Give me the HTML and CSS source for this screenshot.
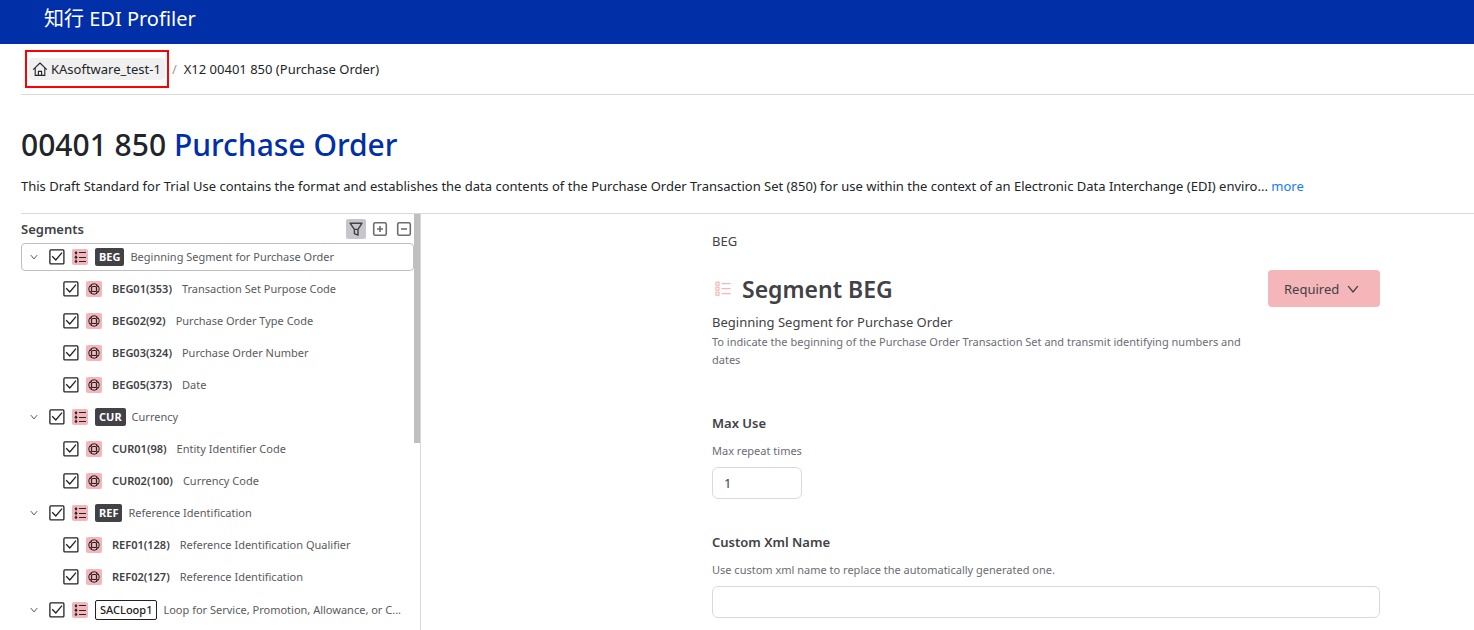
FILE: index.html
```html
<!DOCTYPE html>
<html lang="en">
<head>
  <meta charset="UTF-8">
  <meta name="viewport" content="width=device-width, initial-scale=1.0">
  <title>知行 EDI Profiler</title>
  <link rel="stylesheet" href="styles.css">
</head>
<body>
  <!-- Icon sprite -->
  <svg class="sprite">
    <symbol id="i-home" viewBox="0 0 16 16"><path d="M1.2 8.6 8 2l6.8 6.6M3.2 7v7.4h9.6V7M6.4 14.4v-4h3.2v4" fill="none" stroke="currentColor" stroke-width="1.1" stroke-linejoin="round"/></symbol>
    <symbol id="i-down" viewBox="0 0 10 10"><path d="M1 2.6 5 7.4 9 2.6" fill="none" stroke="currentColor" stroke-width="1.1"/></symbol>
    <symbol id="i-check" viewBox="0 0 16 16"><rect x=".9" y=".9" width="14" height="14" rx="1" fill="none" stroke="currentColor" stroke-width="1.3"/><path d="M3.2 7.2 6.8 11 13 3.6" fill="none" stroke="currentColor" stroke-width="1.3"/></symbol>
    <symbol id="i-list" viewBox="0 0 16 16"><path d="M7 3.5h7M7 8.5h7M7 12.5h7" stroke="currentColor" stroke-width="1"/><path d="M4 3.5v9" stroke="currentColor" stroke-width=".5"/><g fill="currentColor"><circle cx="4" cy="3.7" r="1.3"/><circle cx="4" cy="8.2" r="1.3"/><circle cx="4" cy="12.5" r="1.3"/></g></symbol>
    <symbol id="i-element" viewBox="0 0 16 16"><g fill="none" stroke="currentColor"><circle cx="8" cy="8" r="5.2" stroke-width="1"/><rect x="5.5" y="5.5" width="5" height="5" rx="1" stroke-width="1.2"/></g><path d="M5.5 3v2M10.5 3v2M5.5 11v2M10.5 11v2M3 5.5h2M3 10.5h2M11 5.5h2M11 10.5h2" stroke="currentColor" stroke-width=".9"/></symbol>
    <symbol id="i-segment" viewBox="0 0 16 16"><g fill="none" stroke="currentColor" stroke-width="1.2"><rect x="1" y="1.2" width="3" height="3"/><rect x="1" y="6.2" width="3" height="3"/><rect x="1" y="11.2" width="3" height="3"/><path d="M6.4 2.7h9.2M6.4 7.7h9.2M6.4 12.7h9.2"/></g></symbol>
    <symbol id="i-filter" viewBox="0 0 16 16"><path d="M2 2.2h12L10 8.4v5.8L6.4 12.6V8.4zM6.4 8.4H10" fill="none" stroke="currentColor" stroke-width="1.4" stroke-linejoin="round"/></symbol>
    <symbol id="i-plus" viewBox="0 0 16 16"><rect x="1.7" y="1.7" width="12.6" height="12.6" rx="1.5" fill="none" stroke="currentColor" stroke-width="1.6"/><path d="M5 8h6M8 5v6" stroke="currentColor" stroke-width="1.6"/></symbol>
    <symbol id="i-minus" viewBox="0 0 16 16"><rect x="1.7" y="1.7" width="12.6" height="12.6" rx="1.5" fill="none" stroke="currentColor" stroke-width="1.6"/><path d="M5 8h6" stroke="currentColor" stroke-width="1.6"/></symbol>
  </svg>

  <header class="topbar">
    <span class="brand">知行 EDI Profiler</span>
  </header>

  <div class="page">
    <nav class="breadcrumb">
      <a href="#" class="crumb crumb-active"><svg class="icon"><use href="#i-home"/></svg>KAsoftware_test-1</a>
      <span class="crumb-sep">/</span>
      <span class="crumb">X12 00401 850 (Purchase Order)</span>
    </nav>

    <section class="intro">
      <h1 class="page-title">00401 850 <span class="page-title-name">Purchase Order</span></h1>
      <p class="description">This Draft Standard for Trial Use contains the format and establishes the data contents of the Purchase Order Transaction Set (850) for use within the context of an Electronic Data Interchange (EDI) enviro... <a href="#" class="more">more</a></p>
    </section>

    <div class="workspace">
      <aside class="sidebar">
        <div class="sidebar-head">
          <h2 class="sidebar-title">Segments</h2>
          <div class="tools">
            <button type="button" class="tool tool-on"><svg class="icon"><use href="#i-filter"/></svg></button>
            <button type="button" class="tool"><svg class="icon"><use href="#i-plus"/></svg></button>
            <button type="button" class="tool"><svg class="icon"><use href="#i-minus"/></svg></button>
          </div>
        </div>

        <ul class="tree">
          <li>
            <div class="row row-selected">
              <button type="button" class="toggle"><svg class="caret"><use href="#i-down"/></svg></button>
              <span class="check"><input type="checkbox" id="beg" checked><svg class="icon"><use href="#i-check"/></svg></span>
              <svg class="icon kind"><use href="#i-list"/></svg>
              <label for="beg" class="row-label"><span class="tag">BEG</span><span class="name">Beginning Segment for Purchase Order</span></label>
            </div>
            <ul class="tree-children">
              <li class="row">
                <span class="check"><input type="checkbox" id="beg01" checked><svg class="icon"><use href="#i-check"/></svg></span>
                <svg class="icon kind"><use href="#i-element"/></svg>
                <label for="beg01" class="row-label"><span class="code">BEG01(353)</span><span class="name">Transaction Set Purpose Code</span></label>
              </li>
              <li class="row">
                <span class="check"><input type="checkbox" id="beg02" checked><svg class="icon"><use href="#i-check"/></svg></span>
                <svg class="icon kind"><use href="#i-element"/></svg>
                <label for="beg02" class="row-label"><span class="code">BEG02(92)</span><span class="name">Purchase Order Type Code</span></label>
              </li>
              <li class="row">
                <span class="check"><input type="checkbox" id="beg03" checked><svg class="icon"><use href="#i-check"/></svg></span>
                <svg class="icon kind"><use href="#i-element"/></svg>
                <label for="beg03" class="row-label"><span class="code">BEG03(324)</span><span class="name">Purchase Order Number</span></label>
              </li>
              <li class="row">
                <span class="check"><input type="checkbox" id="beg05" checked><svg class="icon"><use href="#i-check"/></svg></span>
                <svg class="icon kind"><use href="#i-element"/></svg>
                <label for="beg05" class="row-label"><span class="code">BEG05(373)</span><span class="name">Date</span></label>
              </li>
            </ul>
          </li>
          <li>
            <div class="row">
              <button type="button" class="toggle"><svg class="caret"><use href="#i-down"/></svg></button>
              <span class="check"><input type="checkbox" id="cur" checked><svg class="icon"><use href="#i-check"/></svg></span>
              <svg class="icon kind"><use href="#i-list"/></svg>
              <label for="cur" class="row-label"><span class="tag">CUR</span><span class="name">Currency</span></label>
            </div>
            <ul class="tree-children">
              <li class="row">
                <span class="check"><input type="checkbox" id="cur01" checked><svg class="icon"><use href="#i-check"/></svg></span>
                <svg class="icon kind"><use href="#i-element"/></svg>
                <label for="cur01" class="row-label"><span class="code">CUR01(98)</span><span class="name">Entity Identifier Code</span></label>
              </li>
              <li class="row">
                <span class="check"><input type="checkbox" id="cur02" checked><svg class="icon"><use href="#i-check"/></svg></span>
                <svg class="icon kind"><use href="#i-element"/></svg>
                <label for="cur02" class="row-label"><span class="code">CUR02(100)</span><span class="name">Currency Code</span></label>
              </li>
            </ul>
          </li>
          <li>
            <div class="row">
              <button type="button" class="toggle"><svg class="caret"><use href="#i-down"/></svg></button>
              <span class="check"><input type="checkbox" id="ref" checked><svg class="icon"><use href="#i-check"/></svg></span>
              <svg class="icon kind"><use href="#i-list"/></svg>
              <label for="ref" class="row-label"><span class="tag">REF</span><span class="name">Reference Identification</span></label>
            </div>
            <ul class="tree-children">
              <li class="row">
                <span class="check"><input type="checkbox" id="ref01" checked><svg class="icon"><use href="#i-check"/></svg></span>
                <svg class="icon kind"><use href="#i-element"/></svg>
                <label for="ref01" class="row-label"><span class="code">REF01(128)</span><span class="name">Reference Identification Qualifier</span></label>
              </li>
              <li class="row">
                <span class="check"><input type="checkbox" id="ref02" checked><svg class="icon"><use href="#i-check"/></svg></span>
                <svg class="icon kind"><use href="#i-element"/></svg>
                <label for="ref02" class="row-label"><span class="code">REF02(127)</span><span class="name">Reference Identification</span></label>
              </li>
            </ul>
          </li>
          <li>
            <div class="row row-loop">
              <button type="button" class="toggle"><svg class="caret"><use href="#i-down"/></svg></button>
              <span class="check"><input type="checkbox" id="sac" checked><svg class="icon"><use href="#i-check"/></svg></span>
              <svg class="icon kind"><use href="#i-list"/></svg>
              <label for="sac" class="row-label"><span class="tag tag-loop">SACLoop1</span><span class="name">Loop for Service, Promotion, Allowance, or C...</span></label>
            </div>
          </li>
        </ul>
        <div class="scroll-thumb"></div>
      </aside>

      <main class="detail">
        <div class="detail-body">
          <p class="path">BEG</p>
          <div class="detail-head">
            <div class="detail-info">
              <h2 class="detail-title"><svg class="icon detail-icon"><use href="#i-segment"/></svg>Segment BEG</h2>
              <p class="detail-name">Beginning Segment for Purchase Order</p>
              <p class="hint">To indicate the beginning of the Purchase Order Transaction Set and transmit identifying numbers and dates</p>
            </div>
            <button type="button" class="btn-required">Required<svg class="caret-lg"><use href="#i-down"/></svg></button>
          </div>

          <div class="field">
            <label for="max-use" class="field-label">Max Use</label>
            <p class="hint">Max repeat times</p>
            <input type="text" id="max-use" class="input input-short" value="1">
          </div>
          <div class="field">
            <label for="xml-name" class="field-label">Custom Xml Name</label>
            <p class="hint">Use custom xml name to replace the automatically generated one.</p>
            <input type="text" id="xml-name" class="input">
          </div>
        </div>
      </main>
    </div>
  </div>
</body>
</html>
```
FILE: styles.css
```css
:root {
  --brand: #002fa7;
  --line: #d9d9d9;
  --text: #212529;
  --text-soft: #414146;
  --text-muted: #6c6c74;
  --required: #f4b6b9;
  --tag: #414146;
}

* {
  margin: 0;
  padding: 0;
  box-sizing: border-box;
}

body {
  display: flex;
  flex-direction: column;
  height: 100vh;
  overflow: hidden;
  font-family: "Noto Sans", "Noto Sans CJK SC", sans-serif;
  font-size: 13px;
  line-height: 20px;
  color: var(--text);
  background: #fff;
}

button,
input {
  font: inherit;
  color: inherit;
}

button {
  border: 0;
  background: none;
  cursor: pointer;
}

ul {
  list-style: none;
}

.sprite {
  display: none;
}

.icon {
  width: 16px;
  height: 16px;
  flex: none;
}

/* Top bar */
.topbar {
  flex: none;
  height: 44px;
  padding: 4px 44px;
  background: var(--brand);
}

.brand {
  font-size: 20px;
  line-height: 30px;
  color: #fff;
}

.page {
  flex: 1;
  min-height: 0;
  display: flex;
  flex-direction: column;
  padding-left: 21px;
}

/* Breadcrumb */
.breadcrumb {
  flex: none;
  display: flex;
  align-items: center;
  gap: 7px;
  height: 51px;
  padding-left: 8px;
  border-bottom: 1px solid var(--line);
}

.crumb {
  color: var(--text);
  text-decoration: none;
}

.crumb-active {
  position: relative;
  display: flex;
  align-items: center;
  gap: 3px;
  height: 22px;
  padding: 0 4px 0 3px;
  border-radius: 4px;
  background: #f0f0f0;
}

.crumb-active::after {
  content: "";
  position: absolute;
  inset: -8px -4px;
  border: 2px solid #f00;
}

.crumb-sep {
  color: #999;
}

/* Intro */
.intro {
  flex: none;
  padding: 28px 0 17px;
  border-bottom: 1px solid var(--line);
}

.page-title {
  margin-bottom: 9px;
  font-size: 30px;
  font-weight: 500;
  line-height: 44px;
}

.page-title-name {
  color: var(--brand);
}

.description {
  white-space: nowrap;
}

.more {
  color: #1677ff;
  text-decoration: none;
}

.workspace {
  flex: 1;
  min-height: 0;
  display: flex;
}

/* Segment tree */
.sidebar {
  position: relative;
  flex: none;
  width: 400px;
  padding-right: 6px;
  border-right: 1px solid var(--line);
  overflow: hidden;
}

.sidebar-head {
  display: flex;
  align-items: center;
  justify-content: space-between;
  height: 29px;
}

.sidebar-title {
  font-size: 13px;
  font-weight: 600;
  color: var(--text-soft);
}

.tools {
  display: flex;
  gap: 4px;
}

.tool {
  display: flex;
  align-items: center;
  justify-content: center;
  width: 20px;
  height: 20px;
  border-radius: 2px;
  color: var(--text-muted);
}

.tool-on {
  background: #c6c6cb;
  color: var(--text-soft);
}

.row {
  display: flex;
  align-items: center;
  gap: 7px;
  height: 28px;
  margin-bottom: 4px;
  padding-left: 8px;
  border: 1px solid transparent;
  border-radius: 4px;
}

.row-selected {
  border-color: #bfbfbf;
}

.row-loop {
  height: 30px;
}

.tree-children .row {
  padding-left: 41px;
}

.toggle {
  display: flex;
  flex: none;
  width: 12px;
}

.caret {
  width: 8px;
  height: 8px;
  color: var(--text-soft);
}

.check {
  display: grid;
  flex: none;
  color: #222;
}

.check > * {
  grid-area: 1 / 1;
  pointer-events: none;
}

.check input {
  appearance: none;
  width: 16px;
  height: 16px;
  pointer-events: auto;
}

.kind {
  border-radius: 2px;
  background: var(--required);
}

.row-label {
  display: flex;
  align-items: center;
  gap: 6px;
  font-size: 11px;
  line-height: 18px;
  white-space: nowrap;
}

.tree-children .row-label {
  gap: 10px;
  padding-left: 3px;
}

.code {
  font-weight: 600;
  color: var(--text-soft);
}

.name {
  color: #5a5a60;
}

.tag {
  padding: 0 4px;
  border-radius: 2px;
  background: var(--tag);
  color: #fff;
  font-weight: 700;
}

.tag-loop {
  border: 1px solid #222;
  background: #fff;
  color: #222;
  font-weight: 500;
}

.scroll-thumb {
  position: absolute;
  top: 0;
  right: 0;
  width: 6px;
  height: 55%;
  background: #bfbfbf;
}

/* Segment detail */
.detail {
  flex: 1;
  min-width: 0;
  padding: 17px 94px 0 0;
}

.detail-body {
  max-width: 668px;
  margin-left: auto;
  color: var(--text-soft);
}

.path {
  margin-bottom: 19px;
}

.detail-head {
  display: flex;
  align-items: flex-start;
  justify-content: space-between;
  margin-bottom: 44px;
}

.detail-info {
  width: 544px;
}

.detail-title {
  display: flex;
  align-items: center;
  gap: 11px;
  margin-bottom: 4px;
  font-size: 23px;
  font-weight: 600;
  line-height: 38px;
}

.detail-name {
  margin-bottom: 1px;
}

.detail-icon {
  margin-left: 3px;
  color: var(--required);
}

.hint {
  font-size: 11px;
  line-height: 18px;
  color: var(--text-muted);
}

.btn-required {
  display: flex;
  align-items: center;
  gap: 8px;
  width: 112px;
  height: 37px;
  padding: 0 16px;
  border-radius: 4px;
  background: var(--required);
  color: var(--text-soft);
}

.caret-lg {
  width: 12px;
  height: 12px;
}

.field {
  margin-bottom: 33px;
}

.field-label {
  display: block;
  margin-bottom: 9px;
  font-weight: 600;
}

.input {
  display: block;
  width: 100%;
  height: 32px;
  margin-top: 7px;
  padding: 0 11px;
  border: 1px solid var(--line);
  border-radius: 6px;
  background: #fff;
}

.input-short {
  width: 90px;
}
```
